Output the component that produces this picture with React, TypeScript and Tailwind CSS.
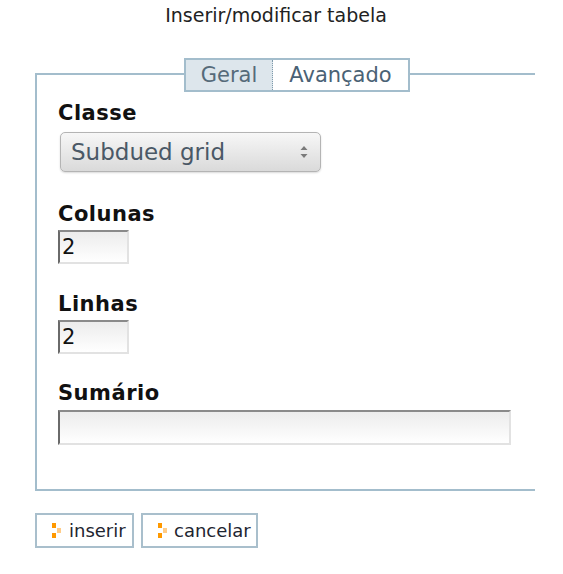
import React from "react";

function Bullet() {
  return (
    <svg width="10" height="15" viewBox="0 0 10 15" className="shrink-0">
      <rect x="0" y="0" width="4" height="5" fill="#ff9900" />
      <rect x="5" y="5" width="4" height="5" fill="#ffcc88" />
      <rect x="0" y="10" width="4" height="5" fill="#ff9900" />
    </svg>
  );
}

function Label({ children, className = "" }: { children: React.ReactNode; className?: string }) {
  return (
    <div className={"text-[21px] font-bold leading-[24px] tracking-[0.5px] text-[#111] " + className}>{children}</div>
  );
}

function Field({ value, className = "" }: { value?: string; className?: string }) {
  return (
    <div
      className={
        "border-2 border-t-[#8a8a8a] border-l-[#6a6a6a] border-r-[#e2e2e2] border-b-[#e2e2e2] bg-gradient-to-b from-[#ececec] to-white pl-[2px] text-[21px] leading-[30px] text-[#111] " +
        className
      }
    >
      {value}
    </div>
  );
}

export default function App() {
  return (
    <div className="w-[563px] h-[574px] bg-white font-['DejaVu_Sans',sans-serif] overflow-hidden">
      <div className="pt-[3px] w-[552px] text-center text-[19px] leading-[25px] text-[#222]">
        Inserir/modificar tabela
      </div>

      <div className="relative z-10 mt-[30px] ml-[184px] flex w-[226px] h-[34px] border-2 border-[#a3bdcc] bg-white text-[21px] leading-[30px]">
        <div className="w-[87px] bg-[#dde6ec] border-r border-dotted border-r-[#7f9aab] text-center text-[#566b7a]">
          Geral
        </div>
        <div className="flex-1 text-center text-[#4a6275]">Avançado</div>
      </div>

      <div className="-mt-[19px] ml-[35px] w-[500px] border-l-2 border-t-2 border-b-2 border-[#a3bdcc] pl-[21px] pt-[26px] pb-[44px]">
        <Label>Classe</Label>
        <div className="mt-[7px] ml-[2px] flex h-[40px] w-[261px] items-center justify-between rounded-[5px] border border-[#b4b4b4] bg-gradient-to-b from-[#f7f7f7] to-[#dadada] pl-[10px] pr-[12px] shadow-[0_1px_2px_rgba(0,0,0,0.15)]">
          <span className="text-[23px] leading-[38px] text-[#4a5866]">Subdued grid</span>
          <svg width="8" height="16" viewBox="0 0 8 16">
            <path d="M4 2 L7.5 6 L0.5 6 Z" fill="#7a7a7a" />
            <path d="M0.5 10 L7.5 10 L4 14 Z" fill="#7a7a7a" />
          </svg>
        </div>

        <Label className="mt-[30px]">Colunas</Label>
        <Field value="2" className="mt-[4px] w-[71px] h-[34px]" />

        <Label className="mt-[28px]">Linhas</Label>
        <Field value="2" className="mt-[4px] w-[71px] h-[34px]" />

        <Label className="mt-[27px]">Sumário</Label>
        <Field className="mt-[5px] w-[453px] h-[35px]" />
      </div>

      <div className="mt-[22px] ml-[35px] flex gap-[7px]">
        <div className="flex h-[35px] w-[99px] items-center border-2 border-[#a9bfcc] pl-[15px] text-[18px] text-[#1e2530]">
          <Bullet />
          <span className="ml-[7px]">inserir</span>
        </div>
        <div className="flex h-[35px] w-[117px] items-center border-2 border-[#a9bfcc] pl-[15px] text-[18px] text-[#1e2530]">
          <Bullet />
          <span className="ml-[6px]">cancelar</span>
        </div>
      </div>
    </div>
  );
}
